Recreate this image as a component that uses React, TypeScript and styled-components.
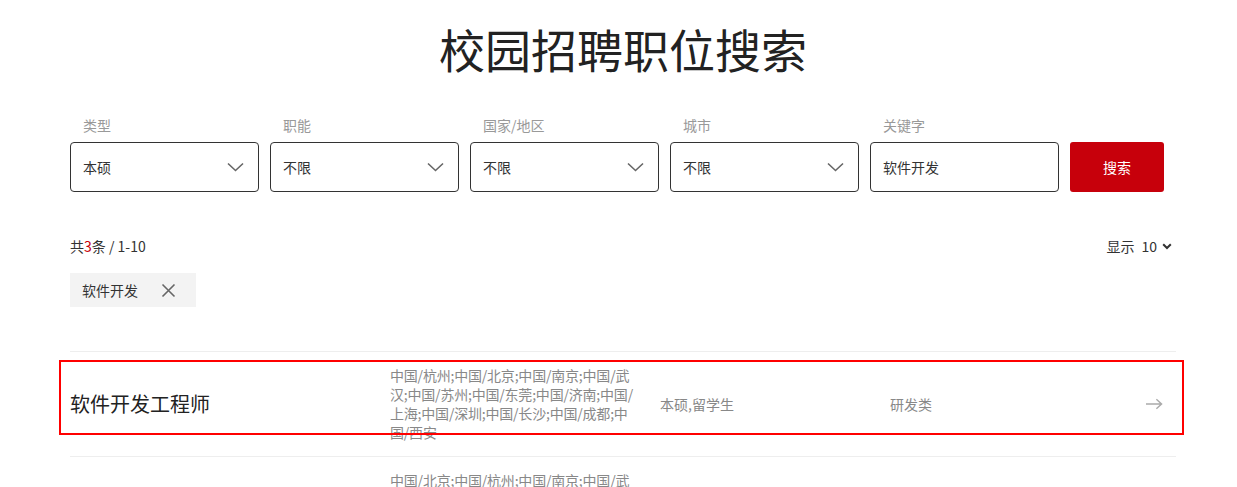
import React from "react";
import styled, { createGlobalStyle } from "styled-components";

const GlobalStyle = createGlobalStyle`
  body {
    margin: 0;
    background: #fff;
    font-family: "Noto Sans CJK SC", "Noto Sans", sans-serif;
    color: #333;
  }
`;

interface Job {
  title: string;
  locations: string;
  degree: string;
  category: string;
}

const jobs: Job[] = [
  {
    title: "软件开发工程师",
    locations:
      "中国/杭州;中国/北京;中国/南京;中国/武汉;中国/苏州;中国/东莞;中国/济南;中国/上海;中国/深圳;中国/长沙;中国/成都;中国/西安",
    degree: "本硕,留学生",
    category: "研发类",
  },
  {
    title: "软件开发工程师（嵌入式）",
    locations:
      "中国/北京;中国/杭州;中国/南京;中国/武汉;中国/苏州;中国/东莞;中国/济南;中国/上海;中国/深圳;中国/长沙;中国/成都;中国/西安",
    degree: "本硕,留学生",
    category: "研发类",
  },
  {
    title: "软件测试工程师",
    locations: "中国/深圳;中国/东莞;中国/杭州",
    degree: "本硕",
    category: "研发类",
  },
];

const filters = [
  { label: "类型", value: "本硕" },
  { label: "职能", value: "不限" },
  { label: "国家/地区", value: "不限" },
  { label: "城市", value: "不限" },
];

const Chevron = () => (
  <svg width="17" height="10" viewBox="0 0 17 10" fill="none">
    <path d="M1 1.5l7.5 7 7.5-7" stroke="#666" strokeWidth="1.6" />
  </svg>
);

const App: React.FC = () => {
  return (
    <>
      <GlobalStyle />
      <Page>
        <Title>校园招聘职位搜索</Title>

        <FilterBar>
          {filters.map((f) => (
            <Field key={f.label}>
              <Label>{f.label}</Label>
              <SelectBox>
                <span>{f.value}</span>
                <Chevron />
              </SelectBox>
            </Field>
          ))}
          <Field>
            <Label>关键字</Label>
            <SelectBox>
              <span>软件开发</span>
            </SelectBox>
          </Field>
          <SearchButton>搜索</SearchButton>
        </FilterBar>

        <ResultBar>
          <span>
            共<Count>3</Count>条 / 1-10
          </span>
          <PageSize>
            显示 <b>10</b>
            <svg width="10" height="7" viewBox="0 0 10 7" fill="none">
              <path d="M1.2 1.2l3.8 3.8 3.8-3.8" stroke="#333" strokeWidth="2" />
            </svg>
          </PageSize>
        </ResultBar>

        <Tag>
          软件开发
          <svg width="15" height="15" viewBox="0 0 15 15" fill="none">
            <path d="M1.5 1.5l12 12M13.5 1.5l-12 12" stroke="#666" strokeWidth="1.6" />
          </svg>
        </Tag>

        <JobList>
          {jobs.map((job, i) => (
            <JobRow key={job.title}>
              {i === 0 && <Highlight />}
              <JobTitle>{job.title}</JobTitle>
              <Locations>{job.locations}</Locations>
              <Cell>{job.degree}</Cell>
              <Cell>{job.category}</Cell>
              <Arrow>
                <svg width="18" height="12" viewBox="0 0 18 12" fill="none">
                  <path d="M0 6h16.5M11 1l5.5 5-5.5 5" stroke="#aaa" strokeWidth="1.5" />
                </svg>
              </Arrow>
            </JobRow>
          ))}
        </JobList>
      </Page>
    </>
  );
};

export default App;

const Page = styled.div`
  width: 1106px;
  margin-left: 70px;
  padding-top: 20px;
`;

const Title = styled.h1`
  margin: 0;
  text-align: center;
  font-size: 46px;
  line-height: 56px;
  font-weight: 400;
  color: #222;
`;

const FilterBar = styled.div`
  display: flex;
  align-items: flex-end;
  gap: 11px;
  margin-top: 39px;
`;

const Field = styled.div`
  display: flex;
  flex-direction: column;
  width: 189px;
`;

const Label = styled.div`
  font-size: 14px;
  line-height: 20px;
  color: #999;
  padding-left: 13px;
  margin-bottom: 7px;
`;

const SelectBox = styled.div`
  height: 50px;
  box-sizing: border-box;
  border: 1px solid #333;
  border-radius: 4px;
  padding: 0 14px 0 12px;
  display: flex;
  align-items: center;
  justify-content: space-between;
  font-size: 14px;
  color: #333;
`;

const SearchButton = styled.button`
  width: 94px;
  height: 50px;
  border: none;
  border-radius: 3px;
  background: #c7000b;
  color: #fff;
  font-family: inherit;
  font-size: 14px;
  cursor: pointer;
`;

const ResultBar = styled.div`
  display: flex;
  justify-content: space-between;
  align-items: center;
  margin-top: 44px;
  font-size: 14px;
  line-height: 20px;
  color: #333;
`;

const Count = styled.span`
  color: #c7000b;
`;

const PageSize = styled.div`
  display: flex;
  align-items: center;
  gap: 5px;
  padding-right: 4px;

  b {
    font-weight: 400;
    margin-left: 2px;
  }
`;

const Tag = styled.div`
  display: inline-flex;
  align-items: center;
  gap: 23px;
  height: 34px;
  margin-top: 17px;
  padding: 0 20px 0 12px;
  background: #f3f3f3;
  font-size: 14px;
  color: #333;
`;

const JobList = styled.div`
  margin-top: 44px;
`;

const JobRow = styled.div`
  position: relative;
  display: grid;
  grid-template-columns: 320px 270px 230px 1fr 30px;
  align-items: center;
  min-height: 104px;
  box-sizing: border-box;
  padding: 14px 0;
  border-top: 1px solid #eee;
`;

const Highlight = styled.div`
  position: absolute;
  left: -11px;
  top: 8px;
  width: 1125px;
  height: 75px;
  box-sizing: border-box;
  border: 2px solid #f00;
  pointer-events: none;
`;

const JobTitle = styled.div`
  font-size: 20px;
  line-height: 28px;
  color: #222;
`;

const Cell = styled.div`
  font-size: 14px;
  line-height: 19px;
  color: #888;
`;

const Locations = styled(Cell)`
  max-width: 250px;
  word-break: break-all;
  letter-spacing: -0.2px;
`;

const Arrow = styled.div`
  display: flex;
  justify-content: flex-end;
  padding-right: 13px;
`;
